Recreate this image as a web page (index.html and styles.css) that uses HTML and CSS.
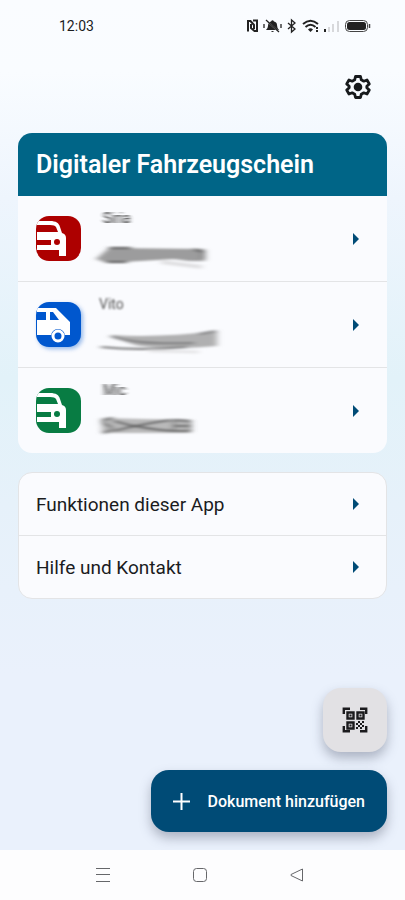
FILE: index.html
```html
<!DOCTYPE html>
<html lang="de">
<head>
<meta charset="utf-8">
<meta name="viewport" content="width=device-width, initial-scale=1">
<title>Digitaler Fahrzeugschein</title>
<link rel="stylesheet" href="styles.css">
</head>
<body>
<svg class="defs" width="0" height="0" aria-hidden="true">
  <defs>
    <filter id="smear" x="-20%" y="-60%" width="140%" height="220%"><feGaussianBlur stdDeviation="3 1.3"/></filter>
    <filter id="smudge" x="-20%" y="-40%" width="140%" height="180%"><feGaussianBlur stdDeviation="2.2 0.6"/></filter>
    <symbol id="car" viewBox="0 0 45 45">
      <path fill="#fff" d="M1 5H14C20 5 23 7 24 11L26 17Q30 18 30 22V40H23V34H1V29H15V24H1V16H22L20 11Q19 9 14 9H1Z"/>
      <path fill="currentColor" d="M1 25H15V28H1Z"/>
      <circle cx="21" cy="26" r="3" fill="currentColor"/>
    </symbol>
    <symbol id="arrow" viewBox="0 0 6 12"><path fill="currentColor" d="M0 0L6 6L0 12Z"/></symbol>
  </defs>
</svg>
<div class="screen">
  <header class="status">
    <time class="clock">12:03</time>
    <svg class="indicators" viewBox="0 0 126 16" aria-hidden="true">
      <path d="M2 13.500V3H4.500L8 7V11M5 6V10L8.500 13H11V2.500H7" fill="none" stroke="#222" stroke-width="2"/>
      <path d="M20 12H33Q31 10 31 7Q31 4 28 3.500Q26.500 1 25 3.500Q22 4 22 8Q22 10 20 12ZM25 13H28Q26.500 15 25 13Z" fill="#222"/>
      <path d="M21 3L34 15" stroke="#fafcff" stroke-width="1.300"/>
      <path d="M20 2L33 14M18 6V10M35 6V10" stroke="#222" stroke-width="1.300"/>
      <path d="M42 5L49 11L45.500 14V2L49 5L42 11" fill="none" stroke="#222" stroke-width="1.300"/>
      <path d="M57 6Q64.500 -.5 72 6M59.500 9Q64.500 4.500 69.500 9" fill="none" stroke="#222" stroke-width="2"/>
      <path d="M62 11.500Q64.500 9 67 11.500L64.500 14Z" fill="#222"/>
      <path d="M70 9h2v2h-2zM70 12h2v2h-2zM78 11h2v3h-2z" fill="#222"/>
      <path d="M82 9h2v5h-2zM86 6h2v8h-2zM91 3h2v11h-2z" fill="#d7d8db"/>
      <rect x="99.500" y="2.500" width="22" height="11" rx="4" fill="none" stroke="#444"/>
      <rect x="101" y="4" width="19" height="8" rx="2.500" fill="#222"/>
      <path d="M123.500 6V10" stroke="#444" stroke-width="1.500"/>
    </svg>
  </header>
  <div class="toolbar">
    <button class="icon-button" type="button" aria-label="Einstellungen">
      <svg width="28" height="28" viewBox="0 0 28 28" aria-hidden="true">
        <path fill="none" stroke="#171a1c" stroke-width="2.800" stroke-linejoin="round" d="M11.500 3.500H16.500L17.300 6.800L19.800 8.200L23 7L25.300 11L22.800 13.300V14.700L25.300 17L23 21L19.800 19.800L17.300 21.200L16.500 24.500H11.500L10.700 21.200L8.200 19.800L5 21L2.700 17L5.200 14.700V13.300L2.700 11L5 7L8.200 8.200L10.700 6.800Z"/>
        <circle cx="14" cy="14" r="4.300" fill="#171a1c"/>
      </svg>
    </button>
  </div>
  <main class="content">
    <section class="card">
      <h1 class="card-title">Digitaler Fahrzeugschein</h1>
      <ul class="list">
        <li><a class="vehicle" href="#siria">
          <svg class="badge red" aria-hidden="true"><use href="#car"/></svg>
          <span class="info">
            <span class="name smudged">Siria</span>
            <svg class="plate" viewBox="0 0 130 26" aria-hidden="true">
              <g filter="url(#smear)"><path fill="#9c9c9d" d="M-3 16L10 5L106 6V18L90 18L75 16L8 20Z"/><path d="M10 5H32M8 19H28M95 6L104 9V16" fill="none" stroke="#555" stroke-width="2"/><path d="M62 19L103 24" stroke="#e0e0e2" stroke-width="4"/></g>
            </svg>
          </span>
          <svg class="arrow" aria-hidden="true"><use href="#arrow"/></svg>
        </a></li>
        <li><a class="vehicle" href="#vito">
          <svg class="badge blue" viewBox="0 0 45 45" aria-hidden="true">
            <path fill="#fff" fill-rule="evenodd" d="M1 6H20L34 20V33H1ZM1 10V18H10V10ZM14 10V18H23L17 10Z"/>
            <circle cx="22" cy="34" r="7" fill="#0057ce"/><circle cx="22" cy="34" r="5" fill="none" stroke="#fff" stroke-width="3"/>
          </svg>
          <span class="info">
            <span class="name">Vito</span>
            <svg class="plate" viewBox="0 0 130 26" aria-hidden="true">
              <g filter="url(#smear)"><path fill="#b0b0b1" d="M12 6Q60 9 118 2V17Q75 21 40 17Q27 14 12 6Z"/><path d="M12 7Q35 16 95 14M2 18Q40 22 88 18M100 5L117 2" fill="none" stroke="#7b7b7d" stroke-width="2"/><path d="M50 22L100 23" stroke="#e6e6e8" stroke-width="3"/></g>
            </svg>
          </span>
          <svg class="arrow" aria-hidden="true"><use href="#arrow"/></svg>
        </a></li>
        <li><a class="vehicle" href="#mic">
          <svg class="badge green" aria-hidden="true"><use href="#car"/></svg>
          <span class="info">
            <span class="name smudged">Mic</span>
            <svg class="plate" viewBox="0 0 130 26" aria-hidden="true">
              <g filter="url(#smear)"><path fill="#b9b9ba" d="M2 3L92 5V18L3 18Z"/><path d="M14 3Q-2 5 8 10Q20 14 4 18M15 6Q42 14 75 16M15 16Q42 9 72 5M75 5V16H91V6ZM76 11H91" fill="none" stroke="#5e5e5f" stroke-width="2"/></g>
            </svg>
          </span>
          <svg class="arrow" aria-hidden="true"><use href="#arrow"/></svg>
        </a></li>
      </ul>
    </section>
    <nav class="card outlined" aria-label="Informationen">
      <ul class="list">
        <li><a class="link" href="#funktionen">Funktionen dieser App<svg class="arrow" aria-hidden="true"><use href="#arrow"/></svg></a></li>
        <li><a class="link" href="#hilfe">Hilfe und Kontakt<svg class="arrow" aria-hidden="true"><use href="#arrow"/></svg></a></li>
      </ul>
    </nav>
    <div class="actions">
      <button class="scan" type="button" aria-label="QR-Code scannen">
        <svg width="26" height="26" viewBox="0 0 26 26" aria-hidden="true">
          <g fill="none" stroke="#1b1b1d" stroke-width="2.400"><path d="M1.800 7V1.800H8M18 1.800H24.200V7M1.800 19V24.200H8M24.200 19V24.200H18"/><path d="M5.500 5.500h6v6H5.500zM15.500 5.500h6v6h-6zM5.500 15.500h6v6H5.500z"/></g>
          <path fill="#1b1b1d" d="M7.500 7.500h2v2h-2zM17.500 7.500h2v2h-2zM7.500 17.500h2v2h-2zM16 14h2v2h-2zM20 14h2v2h-2zM14 16h2v2h-2zM18 16h2v2h-2zM16 18h2v2h-2zM20 18h2v2h-2zM14 20h2v2h-2zM18 20h2v2h-2z"/>
        </svg>
      </button>
      <button class="add" type="button">
        <svg width="17" height="17" viewBox="0 0 17 17" aria-hidden="true"><path d="M8.500 0V17M0 8.500H17" stroke="#fff" stroke-width="2"/></svg>
        Dokument hinzufügen
      </button>
    </div>
  </main>
  <footer class="system">
    <button type="button" aria-label="Letzte Apps"><svg width="16" height="16" viewBox="0 0 16 16"><path d="M1 1.500H15M1 7.500H15M1 14.500H15"/></svg></button>
    <button type="button" aria-label="Startseite"><svg width="16" height="16" viewBox="0 0 16 16"><rect x="1.500" y="1.500" width="13" height="13" rx="3"/></svg></button>
    <button type="button" aria-label="Zurück"><svg width="16" height="16" viewBox="0 0 16 16"><path d="M13.500 2V14L2 8.500V7.500Z" stroke-linejoin="round"/></svg></button>
  </footer>
</div>
</body>
</html>
```
FILE: styles.css
```css
* { box-sizing: border-box; }

body {
  margin: 0;
  font-family: Roboto, "Liberation Sans", sans-serif;
  color: #1b1c1e;
}

button {
  padding: 0;
  border: 0;
  background: none;
  font: inherit;
  cursor: pointer;
}

svg { display: block; flex: none; }

.defs { position: absolute; }

.screen {
  display: flex;
  flex-direction: column;
  min-height: 100vh;
  background: linear-gradient(#fafcff 0, #f9fcff 8%, #eef5fd 22%, #e2f2f9 42%, #e6f1fa 56%, #eaf1fc 75%, #eaf1fc 100%);
}

.status {
  display: flex;
  align-items: center;
  justify-content: space-between;
  height: 52px;
  padding: 0 33px 0 59px;
}

.clock { font-size: 14px; }

.indicators { width: 126px; height: 16px; }

.toolbar {
  display: flex;
  justify-content: flex-end;
  padding: 15px 27px 26px;
}

.icon-button {
  display: grid;
  place-items: center;
  width: 40px;
  height: 40px;
}

.content {
  display: flex;
  flex: 1;
  flex-direction: column;
  gap: 19px;
  padding: 0 18px 18px;
}

.card {
  overflow: hidden;
  border-radius: 14px;
  background: #fafbfe;
}

.outlined { border: 1px solid #e3e4e6; }

.card-title {
  margin: 0;
  padding: 0 18px;
  background: #006587;
  color: #fff;
  font-size: 25px;
  font-weight: 600;
  line-height: 63px;
}

.list {
  margin: 0;
  padding: 0;
  list-style: none;
}

.list li + li { border-top: 1px solid #e3e4e6; }

.vehicle,
.link {
  display: flex;
  align-items: center;
  color: inherit;
  text-decoration: none;
}

.vehicle {
  gap: 18px;
  min-height: 85px;
  padding: 0 28px 0 18px;
}

.link {
  justify-content: space-between;
  min-height: 62px;
  padding: 0 27px 0 17px;
  font-size: 19px;
}

.badge {
  width: 45px;
  height: 45px;
  border-radius: 13px;
}

.red { background: #ad0000; color: #ad0000; }
.blue { background: #0057ce; box-shadow: 2px 2px 4px #0057ce66; }
.green { background: #087c43; color: #087c43; }

.info {
  display: flex;
  flex: 1;
  flex-direction: column;
  gap: 16px;
}

.name {
  font-size: 14px;
  line-height: 18px;
  color: #555;
  filter: blur(1px);
}

.smudged {
  padding-left: 4px;
  color: #333;
  filter: url(#smudge);
}

.plate {
  width: 130px;
  height: 26px;
  overflow: visible;
}

.arrow {
  width: 6px;
  height: 12px;
  color: #004b76;
}

.actions {
  display: flex;
  flex-direction: column;
  align-items: flex-end;
  gap: 18px;
  margin-top: auto;
}

.scan,
.add {
  display: flex;
  align-items: center;
  justify-content: center;
  border-radius: 18px;
  box-shadow: 0 6px 12px #4d566b66;
}

.scan {
  width: 64px;
  height: 64px;
  background: #e2e1e4;
}

.add {
  gap: 18px;
  min-height: 62px;
  padding: 0 22px;
  background: #004b76;
  color: #fff;
  font-size: 16px;
  font-weight: 500;
}

.system {
  display: flex;
  align-items: center;
  justify-content: center;
  gap: 81px;
  height: 50px;
  padding-right: 6px;
  background: #fdfdfe;
}

.system svg {
  fill: none;
  stroke: #66676a;
  stroke-width: 1;
}
```
